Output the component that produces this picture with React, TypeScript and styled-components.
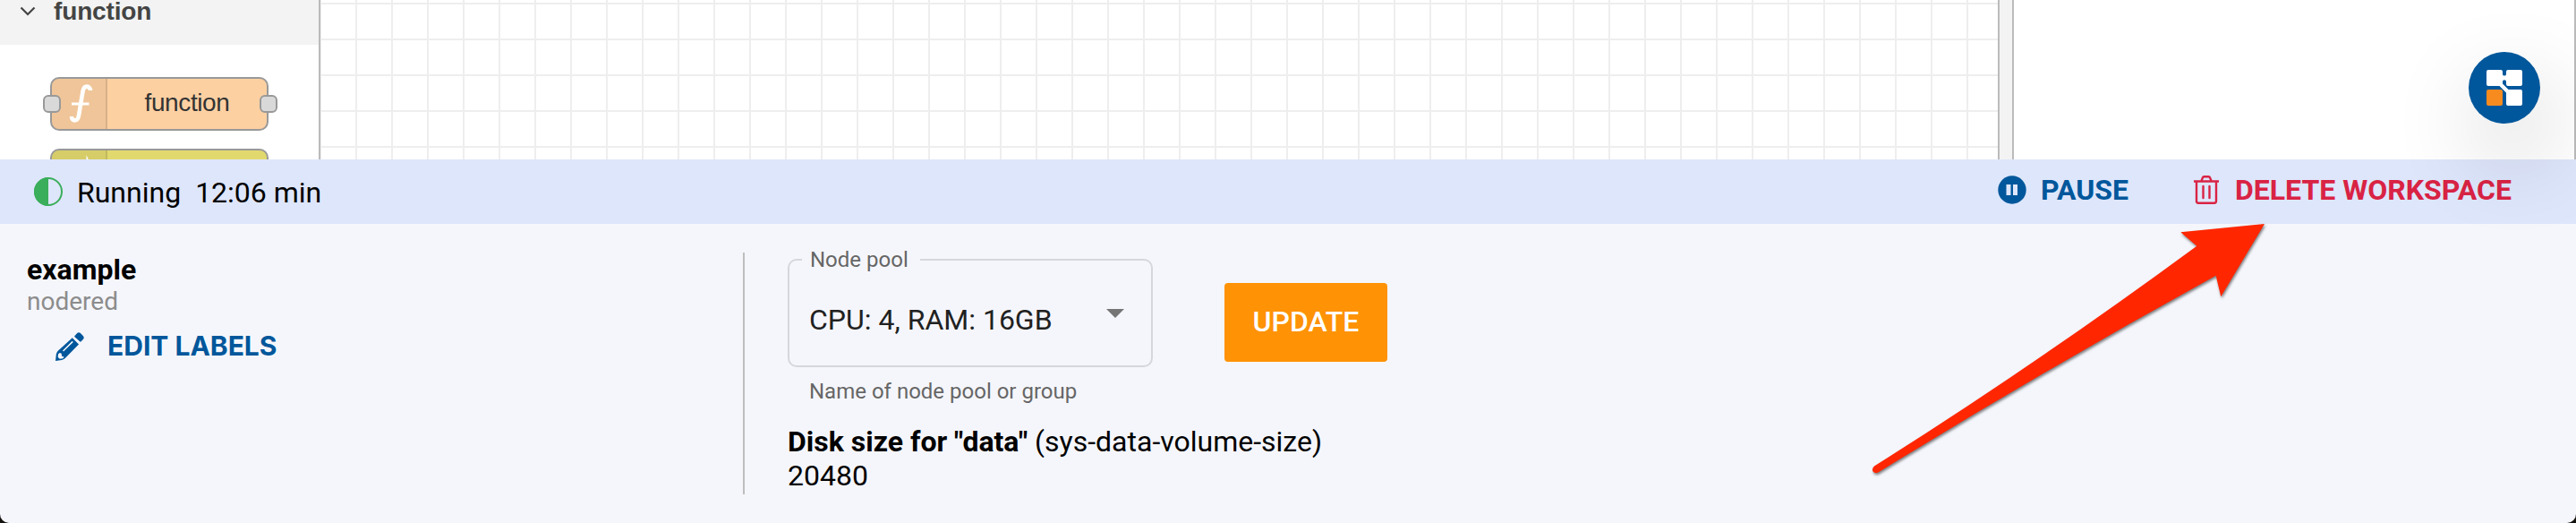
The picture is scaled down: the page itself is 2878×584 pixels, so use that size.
import React from "react";
import styled, { createGlobalStyle } from "styled-components";

const GlobalStyle = createGlobalStyle`
  * { box-sizing: border-box; }
  body { margin: 0; background: #14120f; font-family: Roboto, sans-serif; color: #000; }
`;

const Window = styled.div`
  position: relative;
  display: flex;
  flex-direction: column;
  width: 2878px;
  height: 584px;
  overflow: hidden;
  background: #f5f6fb;
  border-radius: 0 0 10px 10px;
`;

const Editor = styled.div`
  display: flex;
  height: 178px;
  overflow: hidden;
  background: #fff;
  font-family: "Liberation Sans", Arial, sans-serif;
`;

const Palette = styled.aside`
  width: 358px;
  flex: none;
  border-right: 2px solid #bbb;
`;

const Category = styled.div`
  display: flex;
  align-items: flex-start;
  height: 50px;
  padding-left: 22px;
  gap: 20px;
  background: #f3f3f3;
  color: #444;
  font-size: 28px;
  font-weight: 700;
  line-height: 25px;

  svg { margin-top: 5px; }
  span { letter-spacing: -0.15px; }
`;

const NodeList = styled.div`
  display: flex;
  flex-direction: column;
  gap: 20px;
  padding: 36px 0 0 56px;
`;

const PaletteNode = styled.div<{ $color: string }>`
  position: relative;
  display: flex;
  width: 244px;
  height: 60px;
  border: 2px solid #999;
  border-radius: 10px;
  background: ${(p) => p.$color};
  color: #333;
  font-size: 28px;
`;

const NodeIcon = styled.div`
  width: 62px;
  border-right: 2px solid rgba(0, 0, 0, 0.1);
  border-radius: 8px 0 0 8px;
  background: rgba(0, 0, 0, 0.05);
`;

const NodeLabel = styled.div`
  flex: 1;
  line-height: 54px;
  text-align: center;
  letter-spacing: -0.4px;
`;

const Port = styled.i<{ $side: "left" | "right" }>`
  position: absolute;
  top: 18px;
  ${(p) => (p.$side === "left" ? "left: -10px" : "right: -12px")};
  width: 20px;
  height: 20px;
  border: 2px solid #999;
  border-radius: 6px;
  background: #d9d9d9;
`;

const Canvas = styled.main`
  flex: 1;
  background-image: linear-gradient(to right, #eee 2px, transparent 2px),
    linear-gradient(to bottom, #eee 2px, transparent 2px);
  background-size: 40px 40px;
  background-position: 39px 3px;
`;

const Separator = styled.div`
  width: 18px;
  border: solid #bbb;
  border-width: 0 2px;
  background: #f3f3f3;
`;

const SidePanel = styled.aside`
  width: 628px;
  border-right: 2px solid #bbb;
`;

const StatusBar = styled.div`
  display: flex;
  align-items: center;
  height: 72px;
  padding: 0 72px 0 38px;
  background: #dee6fb;
  font-size: 32px;
`;

const StatusText = styled.div`
  display: flex;
  flex: 1;
  gap: 16px;
  margin-left: 16px;
  padding-top: 1px;
`;

const BarAction = styled.button<{ $color: string; $gap: number }>`
  display: flex;
  align-items: center;
  gap: ${(p) => p.$gap}px;
  padding: 0;
  border: 0;
  background: none;
  color: ${(p) => p.$color};
  font: 700 32px Roboto, sans-serif;
`;

const Actions = styled.div`
  display: flex;
  gap: 72px;
  padding-bottom: 4px;
`;

const Details = styled.section`
  display: flex;
  padding-top: 32px;
`;

const Summary = styled.div`
  width: 830px;
  padding-left: 30px;
`;

const WorkspaceName = styled.div`
  font-size: 32px;
  font-weight: 700;
  line-height: 38px;
`;

const WorkspaceKind = styled.div`
  color: #8c8c8c;
  font-size: 28px;
  line-height: 33px;
`;

const EditLabels = styled.button`
  display: flex;
  align-items: center;
  gap: 26px;
  margin: 15px 0 0 32px;
  padding: 0;
  border: 0;
  background: none;
  color: #01579b;
  font: 700 30px Inter, sans-serif;

  svg { margin-top: 2px; }
`;

const Settings = styled.div`
  height: 270px;
  padding-left: 48px;
  border-left: 2px solid #bdbdbd;
`;

const PoolRow = styled.div`
  display: flex;
  align-items: flex-start;
  gap: 80px;
`;

const SelectBox = styled.fieldset`
  display: flex;
  justify-content: space-between;
  align-items: flex-start;
  width: 408px;
  height: 134px;
  margin: -6px 0 0;
  padding: 34px 30px 0 22px;
  border: 2px solid #d5d7dc;
  border-radius: 10px;
  color: #212121;
  font-size: 32px;
  line-height: 38px;

  svg { margin-top: 7px; }
`;

const SelectLabel = styled.legend`
  margin-left: -8px;
  padding: 0 13px 0 9px;
  color: #666;
  font-size: 24px;
  line-height: 28px;
`;

const Helper = styled.div`
  margin: 10px 0 0 24px;
  color: #666;
  font-size: 24px;
  line-height: 35px;
`;

const UpdateButton = styled.button`
  width: 182px;
  height: 88px;
  margin-top: 34px;
  padding: 0 0 3px;
  border: 0;
  border-radius: 4px;
  background: #ff9205;
  color: #fff;
  font: 500 32px Roboto, sans-serif;
`;

const DiskSize = styled.div`
  margin-top: 19px;
  font-size: 32px;
  line-height: 38px;
`;

const Fab = styled.button`
  position: absolute;
  top: 58px;
  right: 40px;
  width: 80px;
  height: 80px;
  padding: 20px;
  border: 0;
  border-radius: 50%;
  background: #01579b;
  box-shadow: 10px 38px 100px rgba(0, 0, 0, 0.2);
  svg { display: block; }
`;

const Arrow = styled.svg`
  position: absolute;
  left: 2080px;
  top: 240px;
  filter: drop-shadow(1px 2px 1.5px rgba(0, 0, 0, 0.5));
`;

export default function App() {
  return (
    <>
      <GlobalStyle />
      <Window>
        <Editor>
          <Palette>
            <Category>
              <svg width="18" height="14" viewBox="0 0 18 14" fill="none" stroke="#444" strokeWidth="2.2">
                <path d="M1.5 3.5 9 11l7.500-7.500" />
              </svg>
              <span>function</span>
            </Category>
            <NodeList>
              <PaletteNode $color="#fdd0a2">
                <NodeIcon>
                  <svg width="60" height="56" viewBox="0 0 60 56" fill="none" stroke="#fff">
                    <path strokeWidth="4.600" d="M43 13C43 8 36 6 34.500 14L30 41C29 48 22 48 22 42" />
                    <path strokeWidth="3" d="M22 28h19.500" />
                  </svg>
                </NodeIcon>
                <NodeLabel>function</NodeLabel>
                <Port $side="left" />
                <Port $side="right" />
              </PaletteNode>
              <PaletteNode $color="#e2d96e">
                <NodeIcon>
                  <svg width="60" height="56" viewBox="0 0 60 56" fill="#fff">
                    <path d="M38.500 5v10h4.500z" />
                  </svg>
                </NodeIcon>
              </PaletteNode>
            </NodeList>
          </Palette>
          <Canvas />
          <Separator />
          <SidePanel />
        </Editor>

        <StatusBar>
          <svg width="32" height="32" viewBox="0 0 32 32">
            <circle cx="16" cy="16" r="15" fill="none" stroke="#3aae5a" strokeWidth="2" />
            <path d="M16 0a16 16 0 0 0 0 32z" fill="#3aae5a" />
          </svg>
          <StatusText>
            <span>Running</span>
            <span>12:06 min</span>
          </StatusText>
          <Actions>
            <BarAction $color="#01579b" $gap={16}>
              <svg width="32" height="32" viewBox="0 0 32 32">
                <circle cx="16" cy="16" r="15.700" fill="#01579b" />
                <path d="M9.500 10h5v12h-5zM17 10h5v12h-5z" fill="#dee6fb" />
              </svg>
              PAUSE
            </BarAction>
            <BarAction $color="#d92344" $gap={17}>
              <svg width="30" height="32" viewBox="0 0 30 32" fill="none" stroke="#d92344" strokeWidth="2.400">
                <path d="M1 6.500h28M4 7v21.500a2.200 2.200 0 0 0 2.200 2.200h17.600a2.200 2.200 0 0 0 2.200-2.200V7M9.500 6l1.300-3.300a2 2 0 0 1 2-1.400h4.400a2 2 0 0 1 2 1.400L20.500 6" />
                <path d="M11.500 12v13M18.500 12v13" strokeLinecap="round" />
              </svg>
              DELETE WORKSPACE
            </BarAction>
          </Actions>
        </StatusBar>

        <Details>
          <Summary>
            <WorkspaceName>example</WorkspaceName>
            <WorkspaceKind>nodered</WorkspaceKind>
            <EditLabels>
              <svg width="32" height="32" viewBox="0 0 32 32" fill="#01579b">
                <path d="M21.500 4 24 1.300q1.800-1.900 3.900-.3l2.900 2.900q1.700 1.800.2 3.900L28.700 10.300q-.7.800-1.500 0L21.500 5.200q-.6-.6 0-1.200z" />
                <path
                  fillRule="evenodd"
                  d="M18.800 6.200 26 13.500 11.500 28.300q-1.800 2-4.500 2.700L0 32l.8-7.500q.4-2 1.700-3.600zM18.700 9.800 8 20.500l1 1L19.800 10.900zM3 24.500l-.3 3.300 2 2 3.600-.5 1.400-1.700-2.600-.8-.4-3-2-.8z"
                />
              </svg>
              EDIT LABELS
            </EditLabels>
          </Summary>
          <Settings>
            <PoolRow>
              <SelectBox>
                <SelectLabel>Node pool</SelectLabel>
                <span>CPU: 4, RAM: 16GB</span>
                <svg width="20" height="10" viewBox="0 0 20 10" fill="#757575">
                  <path d="M0 0h20L10 10z" />
                </svg>
              </SelectBox>
              <UpdateButton>UPDATE</UpdateButton>
            </PoolRow>
            <Helper>Name of node pool or group</Helper>
            <DiskSize>
              <b>Disk size for "data"</b> (sys-data-volume-size)
              <div>20480</div>
            </DiskSize>
          </Settings>
        </Details>

        <Fab aria-label="Apps">
          <svg width="40" height="40" viewBox="0 0 40 40">
            <path
              fill="#fff"
              d="M2 0h14q2 0 2 2v3q0 1.500 2 1.500t2-1.500V2q0-2 2-2h14q2 0 2 2v14q0 2-2 2H24q-2 0-2-2v-3q0-1.800-2-1.800t-2 1.800v2.500l6.500 6.500H38q2 0 2 2v14q0 2-2 2H24q-2 0-2-2V25.500L14.500 18H2q-2 0-2-2V2q0-2 2-2z"
            />
            <rect y="22" width="18" height="18" rx="2" fill="#f78b1f" />
          </svg>
        </Fab>

        <Arrow width="470" height="300" viewBox="0 0 470 300" fill="#ff2600">
          <path d="M450 10 356.300 19.300 374.300 34.700Q193 168 14 280.500Q10.500 284 13 287 16 289.500 20 286.500Q206 172 395.700 67.700L401.300 91.300z" />
        </Arrow>
      </Window>
    </>
  );
}
